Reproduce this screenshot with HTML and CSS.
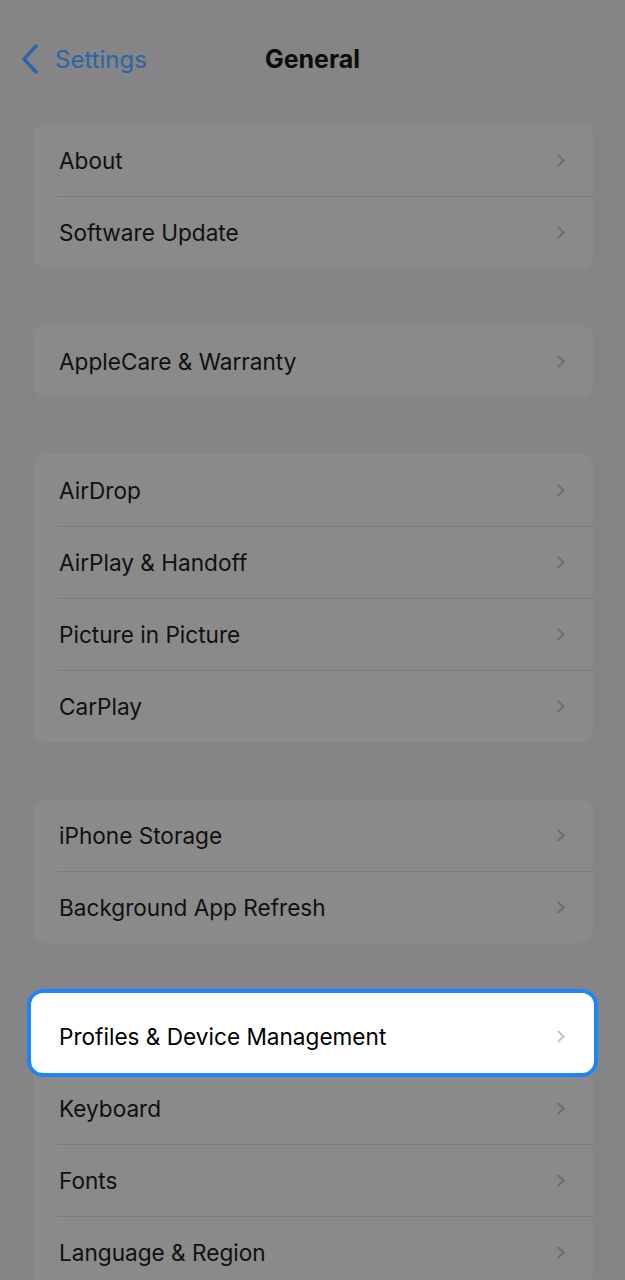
FILE: index.html
```html
<!DOCTYPE html>
<html lang="en">
<head>
    <meta charset="UTF-8">
    <title>General</title>
    <link rel="stylesheet" href="styles.css">
</head>
<body>
<div class="screen">
    <div class="nav">
        <a class="back">
            <svg width="18" height="30" viewBox="0 0 18 30"><polyline points="15,2 3,15 15,28" fill="none" stroke="currentColor" stroke-width="3.4" stroke-linecap="round" stroke-linejoin="round"/></svg>
            <span>Settings</span>
        </a>
        <div class="title">General</div>
        <div></div>
    </div>

    <div class="group">
        <div class="row"><span>About</span><i class="chev"></i></div>
        <div class="row"><span>Software Update</span><i class="chev"></i></div>
    </div>

    <div class="group">
        <div class="row"><span>AppleCare &amp; Warranty</span><i class="chev"></i></div>
    </div>

    <div class="group">
        <div class="row"><span>AirDrop</span><i class="chev"></i></div>
        <div class="row"><span>AirPlay &amp; Handoff</span><i class="chev"></i></div>
        <div class="row"><span>Picture in Picture</span><i class="chev"></i></div>
        <div class="row"><span>CarPlay</span><i class="chev"></i></div>
    </div>

    <div class="group">
        <div class="row"><span>iPhone Storage</span><i class="chev"></i></div>
        <div class="row"><span>Background App Refresh</span><i class="chev"></i></div>
    </div>

    <div class="group">
        <div class="row focus"><span>Profiles &amp; Device Management</span><i class="chev"></i></div>
        <div class="row"><span>Keyboard</span><i class="chev"></i></div>
        <div class="row"><span>Fonts</span><i class="chev"></i></div>
        <div class="row"><span>Language &amp; Region</span><i class="chev"></i></div>
    </div>
</div>
</body>
</html>
```

FILE: styles.css
```css
* {
    margin: 0;
    padding: 0;
    box-sizing: border-box;
}

body {
    background: #858587;
    font-family: Inter, "Liberation Sans", sans-serif;
    color: #101010;
}

.screen {
    height: 1280px;
    overflow: hidden;
}

.nav {
    display: grid;
    grid-template-columns: 1fr auto 1fr;
    align-items: center;
    height: 40px;
    margin-top: 39px;
    margin-bottom: 45px;
}

.back {
    display: flex;
    align-items: center;
    gap: 16px;
    padding-left: 21px;
    color: #2b65a4;
    font-size: 24px;
}

.back svg {
    display: block;
}

.title {
    font-size: 25px;
    font-weight: 700;
    color: #0c0c0c;
}

.group {
    margin: 0 32px 57px 33px;
    background: #8a8a8b;
    border-radius: 12px;
}

.row {
    position: relative;
    display: flex;
    align-items: center;
    justify-content: space-between;
    height: 72px;
    padding: 0 27px 0 26px;
    font-size: 22.6px;
}

.row + .row::before {
    content: "";
    position: absolute;
    top: 0;
    left: 24px;
    right: 0;
    border-top: 1px solid #7b7b7c;
}

.chev {
    width: 9px;
    height: 9px;
    border-top: 2px solid #6d6d6f;
    border-right: 2px solid #6d6d6f;
    transform: rotate(45deg);
    margin-right: 3px;
}

.row.focus {
    z-index: 1;
    color: #000;
}

.row.focus::after {
    content: "";
    position: absolute;
    top: -11px;
    bottom: -5px;
    left: -6px;
    right: -5px;
    background: #fff;
    border: 4.5px solid #1c86f7;
    border-radius: 16px;
    z-index: -1;
}

.row.focus + .row::before {
    display: none;
}

.row.focus .chev {
    border-color: #c5c5c8;
}
```
